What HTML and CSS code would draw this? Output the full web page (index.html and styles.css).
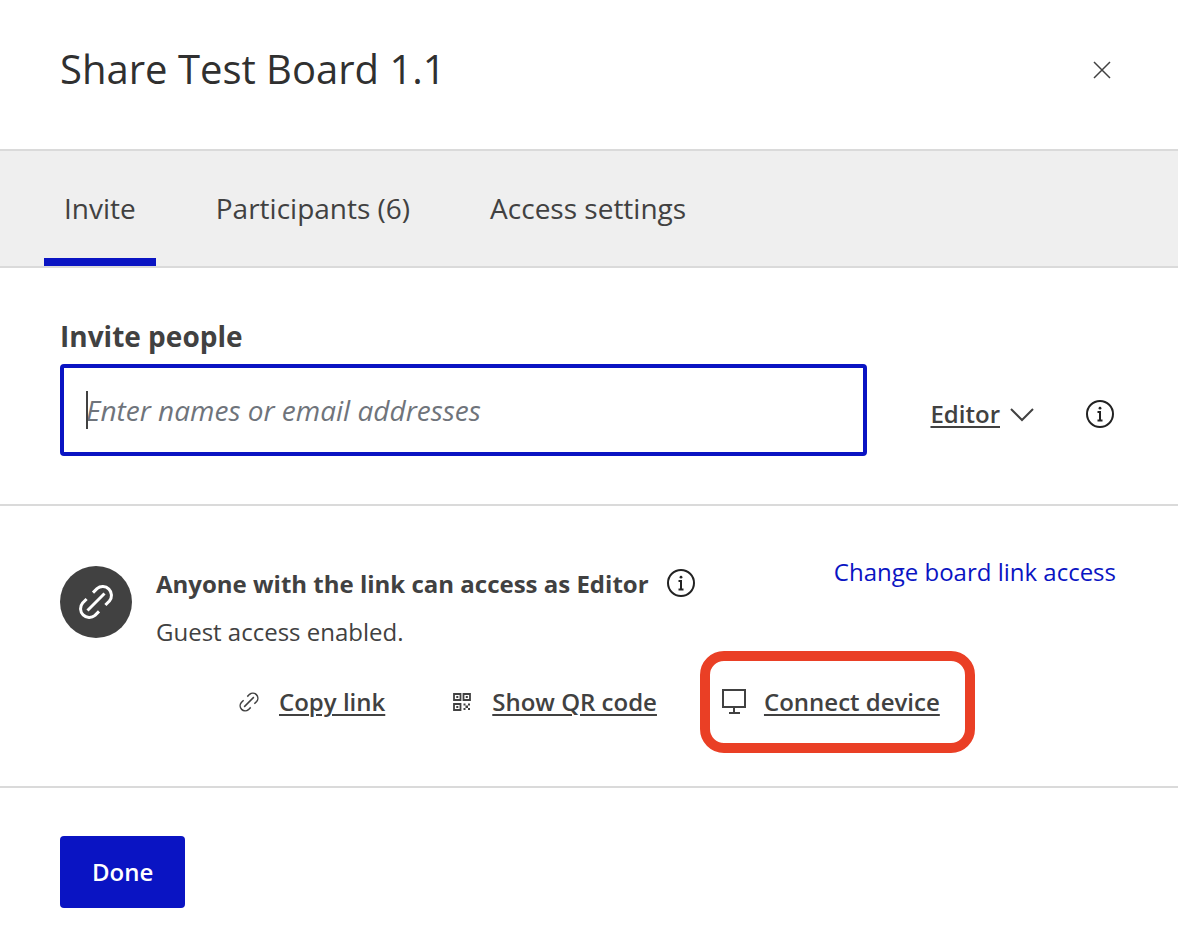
FILE: index.html
```html
<!DOCTYPE html>
<html lang="en">
<head>
<meta charset="utf-8">
<meta name="viewport" content="width=device-width, initial-scale=1">
<title>Share Test Board 1.1</title>
<link rel="stylesheet" href="styles.css">
</head>
<body>
<main class="dialog">
  <header class="dialog-header">
    <h1 class="title">Share Test Board 1.1</h1>
    <button class="icon-button" type="button" aria-label="Close">
      <svg width="28" height="28" viewBox="0 0 28 28" fill="none" stroke="#414141" stroke-width="1.5"><path d="M6 6l16 16M22 6L6 22"/></svg>
    </button>
  </header>

  <nav class="tabs">
    <button class="tab tab-active" type="button">Invite</button>
    <button class="tab" type="button">Participants (6)</button>
    <button class="tab" type="button">Access settings</button>
  </nav>

  <section class="invite">
    <label class="invite-label" for="invitees">Invite people</label>
    <div class="invite-row">
      <div class="field">
        <input class="field-input" id="invitees" type="text" placeholder="Enter names or email addresses">
        <span class="caret"></span>
      </div>
      <div class="role-group">
        <button class="role" type="button">
          <span class="underlined">Editor</span>
          <svg width="24" height="16" viewBox="0 0 24 16" fill="none" stroke="#414141" stroke-width="2"><path d="M1 3l11 11L23 3"/></svg>
        </button>
        <button class="icon-button" type="button" aria-label="About roles">
          <svg width="28" height="28" viewBox="0 0 28 28" fill="none" stroke="#222" stroke-width="2"><circle cx="14" cy="14" r="13"/><path d="M11.5 12H14v8.5M11.5 20.5h5"/><circle cx="14" cy="8.2" r="1.4" fill="#222" stroke="none"/></svg>
        </button>
      </div>
    </div>
  </section>

  <section class="link-access">
    <div class="link-badge">
      <svg width="40" height="40" viewBox="0 0 40 40" fill="none" stroke="#fff" stroke-width="3"><path d="M11.5 28.5l17-17M17 10.6l4-4A8.8 8.8 0 0 1 33.4 19l-4 4M10.6 17l-4 4A8.8 8.8 0 0 0 19 33.4l4-4"/></svg>
    </div>
    <div class="link-body">
      <div class="link-top">
        <div class="link-text">
          <div class="link-heading">
            <h2 class="link-title">Anyone with the link can access as Editor</h2>
            <button class="icon-button" type="button" aria-label="About link access">
              <svg width="28" height="28" viewBox="0 0 28 28" fill="none" stroke="#222" stroke-width="2"><circle cx="14" cy="14" r="13"/><path d="M11.5 12H14v8.5M11.5 20.5h5"/><circle cx="14" cy="8.2" r="1.4" fill="#222" stroke="none"/></svg>
            </button>
          </div>
          <p class="guest">Guest access enabled.</p>
        </div>
        <a class="change-link" href="#">Change board link access</a>
      </div>
      <div class="actions">
        <button class="action" type="button">
          <svg width="24" height="24" viewBox="-1 -1 42 42" fill="none" stroke="#414141" stroke-width="2.6"><path d="M11.5 28.5l17-17M17 10.6l4-4A8.8 8.8 0 0 1 33.4 19l-4 4M10.6 17l-4 4A8.8 8.8 0 0 0 19 33.4l4-4"/></svg>
          <span class="underlined">Copy link</span>
        </button>
        <button class="action" type="button">
          <svg width="24" height="24" viewBox="0 0 24 24" fill="none" stroke="#414141" stroke-width="1.8"><path d="M4 4h6.500v6H4zM13.500 4H20v6h-6.500zM4 14h6.500v6H4z"/><path fill="#414141" stroke="none" d="M6.300 6h2v2h-2zM15.800 6h2v2h-2zM6.300 16h2v2h-2zM13.500 13.500h2v2h-2zM18 13.500h2v2h-2zM15.500 15.500h2.500V18h-2.500zM13.500 18h2v2h-2zM18 18h2v2h-2z"/></svg>
          <span class="underlined">Show QR code</span>
        </button>
        <button class="action action-marked" type="button">
          <svg width="26" height="26" viewBox="0 0 26 26" fill="none" stroke="#414141" stroke-width="2"><path d="M2 1h22v17H2zM13 18v6M8 24h11"/></svg>
          <span class="underlined">Connect device</span>
        </button>
      </div>
    </div>
  </section>

  <footer class="dialog-footer">
    <button class="done" type="button">Done</button>
  </footer>
</main>
</body>
</html>
```
FILE: styles.css
```css
* {
  box-sizing: border-box;
}

body {
  margin: 0;
  background: #fff;
  color: #414141;
  font: 24px/32px "Open Sans", "Noto Sans", sans-serif;
}

button {
  padding: 0;
  border: 0;
  background: none;
  color: inherit;
  font: inherit;
  cursor: pointer;
}

svg {
  display: block;
  flex: none;
}

.dialog-header {
  display: flex;
  align-items: center;
  justify-content: space-between;
  padding: 40px 62px 49px 60px;
}

.title {
  margin: 0;
  padding-bottom: 2px;
  color: #303030;
  font-size: 40px;
  font-weight: 400;
  line-height: 58px;
}

.icon-button {
  flex: none;
}

.tabs {
  display: flex;
  gap: 40px;
  padding: 0 44px;
  border-top: 2px solid #dadada;
  border-bottom: 2px solid #dadada;
  background: #efefef;
}

.tab {
  padding: 39px 20px 31px;
  border-bottom: 8px solid transparent;
  font-size: 28px;
  line-height: 37px;
}

.tab-active {
  border-bottom-color: #0a14c3;
}

.invite {
  padding: 48px 64px 48px 60px;
  border-bottom: 2px solid #dadada;
}

.invite-label {
  display: block;
  margin-bottom: 8px;
  font-size: 28px;
  font-weight: 700;
  line-height: 40px;
}

.invite-row {
  display: flex;
  align-items: center;
  gap: 63px;
}

.field {
  position: relative;
  flex: 1;
}

.field-input {
  display: block;
  width: 100%;
  height: 92px;
  padding: 0 22px;
  border: 4px solid #0a14c3;
  border-radius: 4px;
  outline: 0;
  color: #414141;
  font: 28px "Open Sans", "Noto Sans", sans-serif;
}

.field-input::placeholder {
  color: #6f747b;
  font-style: italic;
  opacity: 1;
}

.caret {
  position: absolute;
  top: 27px;
  left: 26px;
  width: 2px;
  height: 38px;
  background: #414141;
}

.role-group {
  display: flex;
  align-items: center;
  gap: 52px;
  padding-top: 7px;
}

.role {
  display: flex;
  align-items: center;
  gap: 10px;
  font-weight: 600;
}

.underlined {
  text-decoration: underline 2px;
  text-underline-offset: 3px;
}

.link-access {
  display: flex;
  gap: 24px;
  padding: 48px 62px 33px 60px;
  border-bottom: 2px solid #dadada;
}

.link-badge {
  display: grid;
  place-items: center;
  flex: none;
  width: 72px;
  height: 72px;
  margin-top: 12px;
  border-radius: 50%;
  background: #414141;
}

.link-body {
  flex: 1;
}

.link-top {
  display: flex;
  justify-content: space-between;
  padding-top: 2px;
}

.link-text {
  padding-top: 12px;
}

.link-heading {
  display: flex;
  gap: 18px;
}

.link-heading .icon-button {
  align-self: flex-start;
  padding-top: 1px;
}

.link-title {
  margin: 0;
  font-size: 24px;
  font-weight: 700;
}

.guest {
  margin: 16px 0 0;
}

.change-link {
  color: #0a14c3;
  text-decoration: none;
}

.actions {
  display: flex;
  align-items: center;
  margin-top: 3px;
  padding-left: 81px;
}

.action {
  display: flex;
  align-items: center;
  gap: 18px;
  margin-right: 65px;
  font-weight: 600;
}

.action-marked {
  gap: 17px;
  margin: 0 0 0 -22px;
  padding: 25px;
  padding-left: 11px;
  border: 10px solid #ea3f25;
  border-radius: 24px;
}

.dialog-footer {
  padding: 48px 60px;
}

.done {
  padding: 20px 32px;
  border-radius: 4px;
  background: #0a14c3;
  color: #fff;
  font-weight: 600;
}
```
